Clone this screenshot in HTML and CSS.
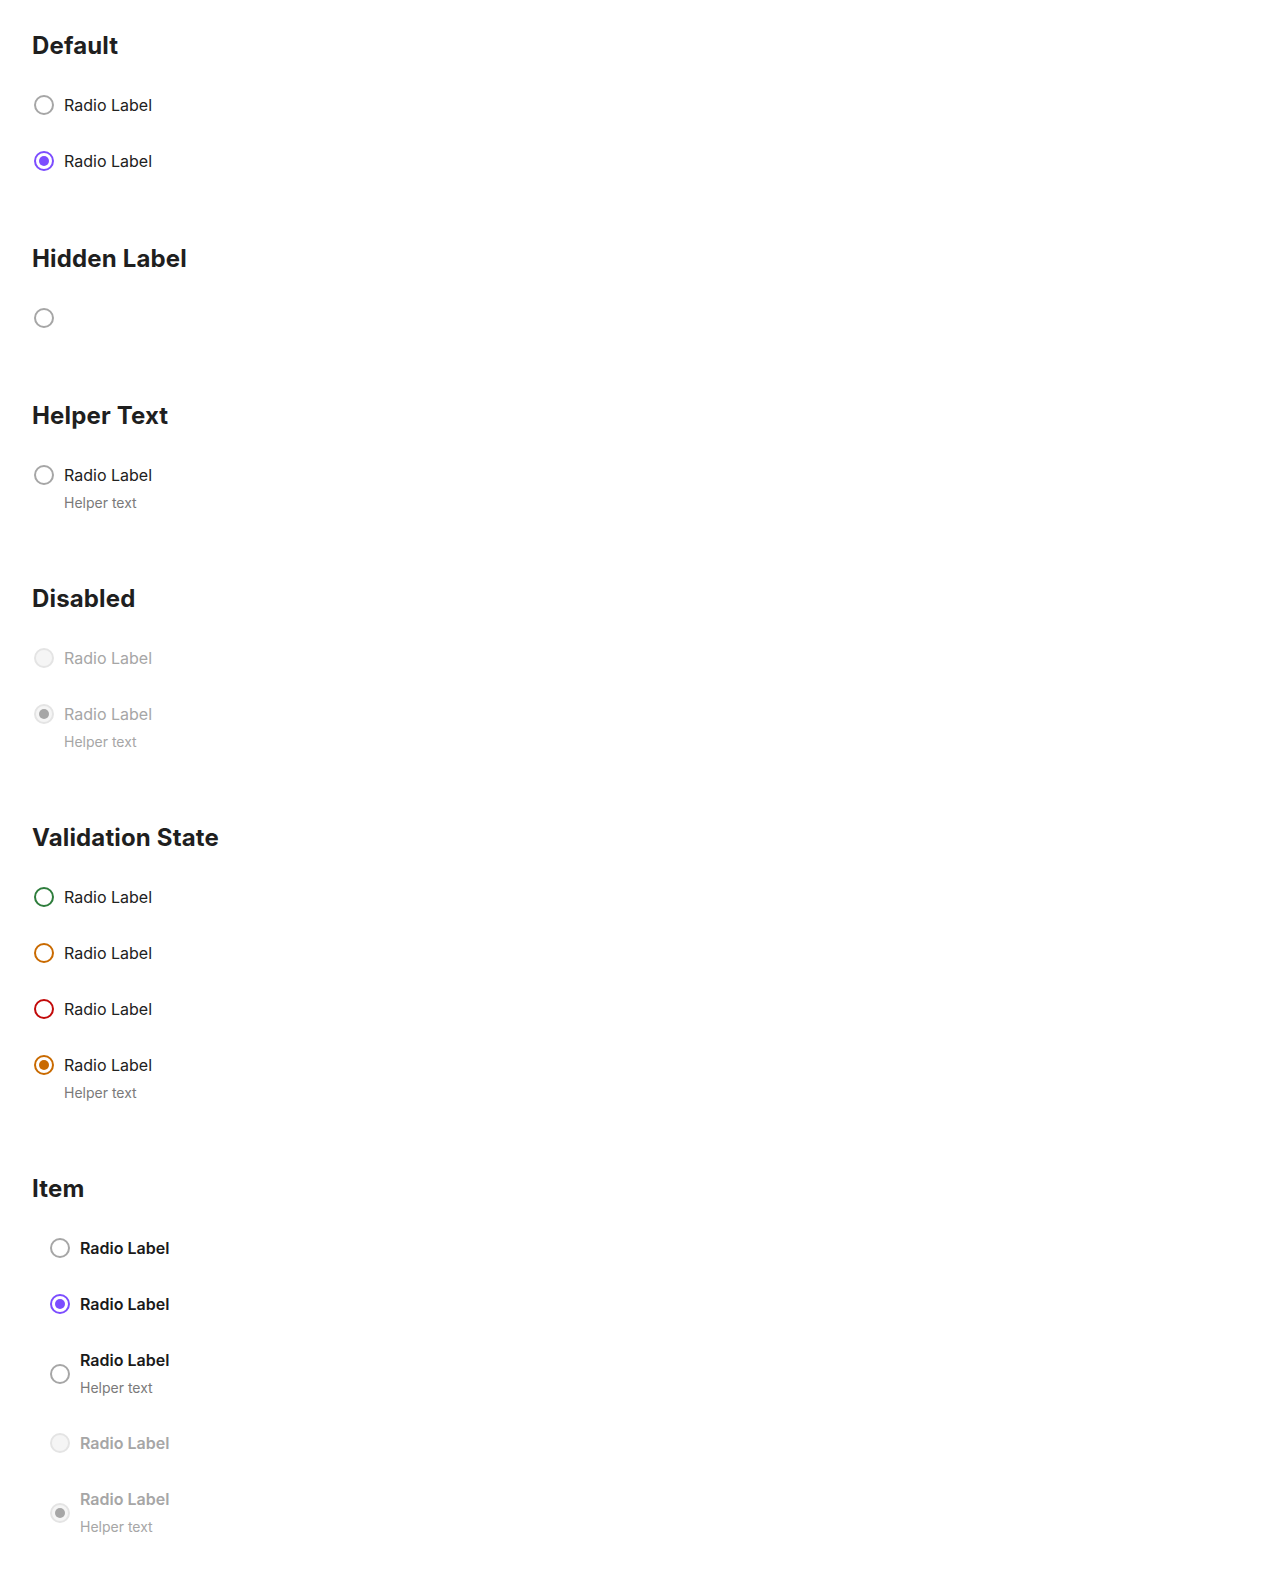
FILE: index.html
```html
<!DOCTYPE html>
<html lang="en">
<head>
<meta charset="utf-8">
<title>Radio</title>
<link rel="stylesheet" href="styles.css">
</head>
<body>
<main class="page">
  <section class="section">
    <h2 class="title">Default</h2>
    <div class="group">
      <label class="radio"><span class="control"><span class="circle"></span></span><span class="text"><span class="label">Radio Label</span></span></label>
      <label class="radio"><span class="control"><span class="circle is-checked"></span></span><span class="text"><span class="label">Radio Label</span></span></label>
    </div>
  </section>

  <section class="section">
    <h2 class="title">Hidden Label</h2>
    <div class="group">
      <label class="radio"><span class="control"><span class="circle"></span></span></label>
    </div>
  </section>

  <section class="section">
    <h2 class="title">Helper Text</h2>
    <div class="group">
      <label class="radio"><span class="control"><span class="circle"></span></span><span class="text"><span class="label">Radio Label</span><span class="helper">Helper text</span></span></label>
    </div>
  </section>

  <section class="section">
    <h2 class="title">Disabled</h2>
    <div class="group">
      <label class="radio is-disabled"><span class="control"><span class="circle"></span></span><span class="text"><span class="label">Radio Label</span></span></label>
      <label class="radio is-disabled"><span class="control"><span class="circle is-checked"></span></span><span class="text"><span class="label">Radio Label</span><span class="helper">Helper text</span></span></label>
    </div>
  </section>

  <section class="section">
    <h2 class="title">Validation State</h2>
    <div class="group">
      <label class="radio"><span class="control"><span class="circle is-success"></span></span><span class="text"><span class="label">Radio Label</span></span></label>
      <label class="radio"><span class="control"><span class="circle is-warning"></span></span><span class="text"><span class="label">Radio Label</span></span></label>
      <label class="radio"><span class="control"><span class="circle is-error"></span></span><span class="text"><span class="label">Radio Label</span></span></label>
      <label class="radio"><span class="control"><span class="circle is-warning is-checked"></span></span><span class="text"><span class="label">Radio Label</span><span class="helper">Helper text</span></span></label>
    </div>
  </section>

  <section class="section">
    <h2 class="title">Item</h2>
    <div class="group">
      <label class="radio item"><span class="control"><span class="circle"></span></span><span class="text"><span class="label">Radio Label</span></span></label>
      <label class="radio item"><span class="control"><span class="circle is-checked"></span></span><span class="text"><span class="label">Radio Label</span></span></label>
      <label class="radio item"><span class="control"><span class="circle"></span></span><span class="text"><span class="label">Radio Label</span><span class="helper">Helper text</span></span></label>
      <label class="radio item is-disabled"><span class="control"><span class="circle"></span></span><span class="text"><span class="label">Radio Label</span></span></label>
      <label class="radio item is-disabled"><span class="control"><span class="circle is-checked"></span></span><span class="text"><span class="label">Radio Label</span><span class="helper">Helper text</span></span></label>
    </div>
  </section>
</main>
</body>
</html>
```

FILE: styles.css
```css
* { box-sizing: border-box; }

html, body {
  margin: 0;
  padding: 0;
  background: #ffffff;
}

body {
  font-family: Inter, "Noto Sans", "Liberation Sans", sans-serif;
  color: #212121;
}

.page {
  padding: 30px 32px 32px;
}

.section + .section {
  margin-top: 70px;
}

.title {
  margin: 0 0 31px;
  font-size: 24px;
  line-height: 32px;
  font-weight: 700;
  color: #1f1f1f;
  letter-spacing: 0.15px;
}

.group {
  display: flex;
  flex-direction: column;
  gap: 32px;
}

.radio {
  display: flex;
  align-items: flex-start;
  gap: 8px;
}

.control {
  width: 24px;
  height: 24px;
  flex: 0 0 24px;
  display: flex;
  align-items: center;
  justify-content: center;
}

.circle {
  width: 20px;
  height: 20px;
  border-radius: 50%;
  border: 2px solid #a6a6a6;
  background: #ffffff;
  display: flex;
  align-items: center;
  justify-content: center;
}

.circle.is-checked {
  border-color: #7c4dff;
}

.circle.is-checked::after {
  content: "";
  width: 10px;
  height: 10px;
  border-radius: 50%;
  background: #7c4dff;
}

.circle.is-success { border-color: #2e7d3c; }
.circle.is-warning { border-color: #c96a00; }
.circle.is-error { border-color: #c20a0a; }
.circle.is-warning.is-checked::after { background: #c96a00; }

.text {
  display: flex;
  flex-direction: column;
}

.label {
  font-size: 16px;
  line-height: 24px;
  font-weight: 400;
  color: #212121;
}

.helper {
  margin-top: 6px;
  font-size: 14px;
  line-height: 20px;
  color: #7a7a7a;
}

.radio.is-disabled .label,
.radio.is-disabled .helper {
  color: #a6a6a6;
}

.radio.is-disabled .circle {
  border-color: #e4e4e4;
  background: #f5f5f5;
}

.radio.is-disabled .circle.is-checked::after {
  background: #a6a6a6;
}

.radio.item {
  align-items: center;
  padding-left: 16px;
}

.radio.item .label {
  font-weight: 600;
  color: #1a1a1a;
}

.radio.item .helper {
  margin-top: 5px;
  line-height: 22px;
}

.radio.item.is-disabled .label {
  color: #a6a6a6;
}
```
